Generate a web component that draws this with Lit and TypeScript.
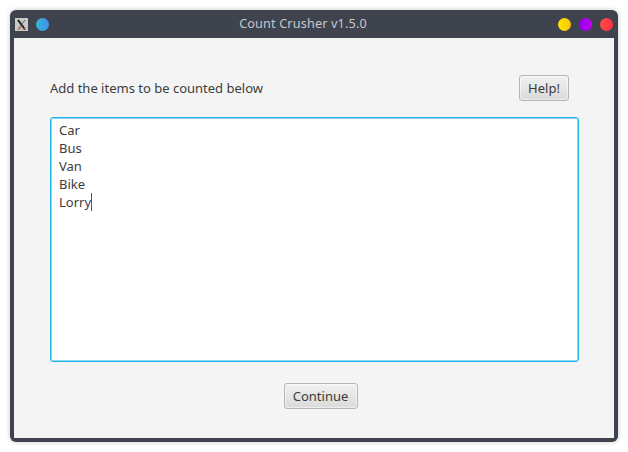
import { LitElement, html, css } from "lit";
import { customElement } from "lit/decorators.js";

@customElement("app-root")
export class AppRoot extends LitElement {
  static styles = css`
    :host {
      display: block;
      width: 628px;
      height: 452px;
      background: #ffffff;
      font-family: "Noto Sans", "Open Sans", sans-serif;
      font-size: 13px;
      color: #3c3c3c;
    }
    .page {
      box-sizing: border-box;
      width: 628px;
      height: 452px;
      padding: 10px;
    }
    .window {
      box-sizing: border-box;
      width: 608px;
      height: 432px;
      display: flex;
      flex-direction: column;
      background: #3f434e;
      border-radius: 6px;
      padding: 0 4px 4px;
      box-shadow: 0 0 5px rgba(0, 0, 0, 0.22);
    }
    .titlebar {
      height: 28px;
      flex: none;
      display: grid;
      grid-template-columns: 1fr auto 1fr;
      align-items: center;
      color: #c4c7ce;
      font-size: 12.67px;
      letter-spacing: 0.15px;
    }
    .left, .right { display: flex; align-items: center; }
    .left { gap: 8px; margin-top: 1px; margin-left: 1px; }
    .right { justify-content: flex-end; gap: 8px; margin-top: 1px; margin-right: 1px; }
    .title { position: relative; left: -11px; top: -1px; }
    .appicon { width: 13px; height: 13px; display: block; }
    .dot { width: 13px; height: 13px; border-radius: 50%; }
    .blue { background: linear-gradient(90deg, #2fb6d8, #4a8ff0); }
    .yellow { background: linear-gradient(90deg, #ffe500, #ffc20a); }
    .purple { background: linear-gradient(90deg, #8f00e6, #c400f5); }
    .red { background: linear-gradient(90deg, #ff4d3d, #ff2f4b); }
    .content {
      flex: 1;
      min-height: 0;
      background: #f4f4f4;
      display: flex;
      flex-direction: column;
      padding: 37px 35px 29px 36px;
    }
    .top {
      display: flex;
      align-items: center;
      justify-content: space-between;
      height: 26px;
      padding-right: 10px;
    }
    .btn {
      box-sizing: border-box;
      height: 26px;
      border: 1px solid #b5b5b5;
      border-radius: 3px;
      background: linear-gradient(180deg, #f1f1f1, #dadada);
      box-shadow: inset 0 0 0 1px rgba(255, 255, 255, 0.5);
      display: flex;
      align-items: center;
      justify-content: center;
      font: inherit;
      color: #3c3c3c;
      padding: 0;
    }
    .help { width: 50px; }
    .cont { width: 74px; }
    .area {
      box-sizing: border-box;
      margin-top: 16px;
      height: 245px;
      flex: none;
      background: #ffffff;
      border: 1px solid #1fb3e5;
      box-shadow: inset 0 0 0 1px #8ad8f2;
      border-radius: 3px;
      padding: 3px 8px;
      line-height: 18px;
    }
    .line { height: 18px; display: flex; align-items: center; }
    .caret {
      display: inline-block;
      width: 1px;
      height: 18px;
      background: #5a5a5a;
    }
    .bottom {
      margin-top: 21px;
      display: flex;
      justify-content: center;
      padding-left: 12px;
    }
  `;

  render() {
    const items = ["Car", "Bus", "Van", "Bike"];
    return html`
      <div class="page">
        <div class="window">
          <div class="titlebar">
            <div class="left">
              <svg class="appicon" viewBox="0 0 13 13">
                <rect width="13" height="13" fill="#c9c9c5" />
                <path d="M3 2 L10 11.5" stroke="#1c1c1c" stroke-width="2" fill="none" />
                <path d="M10 2 L3.5 10.5" stroke="#4a4a4a" stroke-width="0.8" fill="none" />
                <path d="M2.5 11.5 Q5.5 11.5 7 8.5" stroke="#c8643c" stroke-width="1" fill="none" />
                <path d="M7 11.5 Q9.5 11 11 9" stroke="#d89070" stroke-width="0.8" fill="none" />
              </svg>
              <div class="dot blue"></div>
            </div>
            <div class="title">Count Crusher v1.5.0</div>
            <div class="right">
              <div class="dot yellow"></div>
              <div class="dot purple"></div>
              <div class="dot red"></div>
            </div>
          </div>
          <div class="content">
            <div class="top">
              <span>Add the items to be counted below</span>
              <button class="btn help">Help!</button>
            </div>
            <div class="area">
              ${items.map((i) => html`<div class="line">${i}</div>`)}
              <div class="line">Lorry<span class="caret"></span></div>
            </div>
            <div class="bottom">
              <button class="btn cont">Continue</button>
            </div>
          </div>
        </div>
      </div>
    `;
  }
}
